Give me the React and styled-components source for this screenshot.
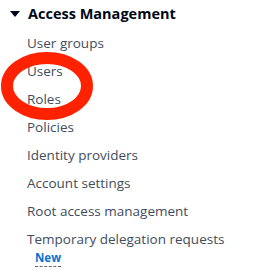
import React from "react";
import styled, { createGlobalStyle } from "styled-components";

const Global = createGlobalStyle`
  html, body { margin: 0; padding: 0; background: #ffffff; }
  body { font-family: "Open Sans", "Noto Sans", Arial, sans-serif; }
`;

const Nav = styled.nav`
  position: relative;
  width: 279px;
  height: 277px;
  overflow: hidden;
  padding: 4px 0 0 10px;
  box-sizing: border-box;
`;

const Header = styled.div`
  display: flex;
  align-items: center;
  gap: 8px;
  height: 20px;
  font-size: 14.5px;
  line-height: 20px;
  font-weight: 700;
  color: #000716;
`;

const Caret = styled.svg`
  width: 10px;
  height: 6px;
  flex: none;
`;

const List = styled.ul`
  list-style: none;
  margin: 0;
  padding: 5px 0 0 17px;
  display: flex;
  flex-direction: column;
`;

const Item = styled.li`
  font-size: 13.5px;
  line-height: 20px;
  padding: 4px 0;
  color: #414d5c;
`;

const Badge = styled.span`
  display: block;
  width: fit-content;
  margin: 1px 0 0 8px;
  font-size: 11.5px;
  line-height: 16px;
  font-weight: 700;
  color: #0972d3;
  border-bottom: 1px dashed #5f6b7a;
`;

const Ring = styled.svg`
  position: absolute;
  left: 0;
  top: 50px;
  width: 96px;
  height: 72px;
  pointer-events: none;
`;

const items = [
  "User groups",
  "Users",
  "Roles",
  "Policies",
  "Identity providers",
  "Account settings",
  "Root access management",
];

export default function App() {
  return (
    <>
      <Global />
      <Nav>
        <Header>
          <Caret viewBox="0 0 10 6">
            <polygon points="0,0 10,0 5,6" fill="#000716" />
          </Caret>
          <span>Access Management</span>
        </Header>
        <List>
          {items.map((t) => (
            <Item key={t}>{t}</Item>
          ))}
          <Item>
            Temporary delegation requests
            <Badge>New</Badge>
          </Item>
        </List>
        <Ring viewBox="0 0 96 72">
          <ellipse cx="47" cy="36" rx="40" ry="28" fill="none" stroke="#ff2200" strokeWidth="12" />
        </Ring>
      </Nav>
    </>
  );
}
